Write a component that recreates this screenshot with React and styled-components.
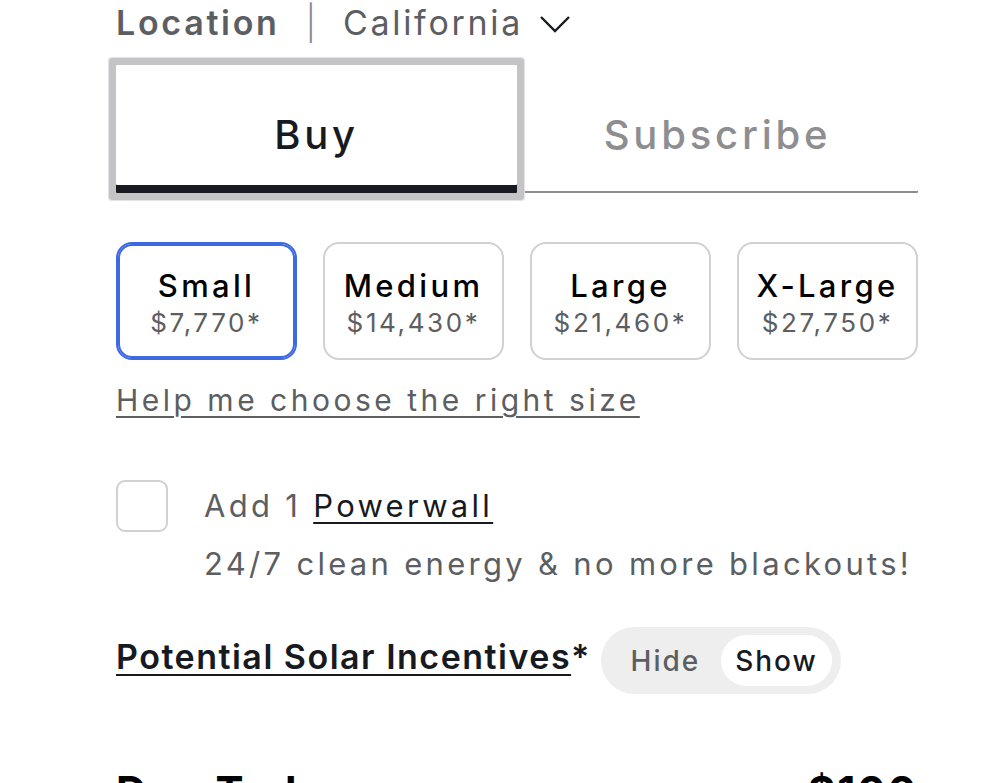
import React, { useState } from 'react';
import styled, { createGlobalStyle } from 'styled-components';

const COLORS = {
  dark: '#171a20',
  grey: '#5c5e62',
  muted: '#8e8e90',
  line: '#d0d1d2',
  blue: '#3e6ae1',
  pill: '#eeeeee',
  ring: '#c4c4c6',
};

const GlobalStyle = createGlobalStyle`
  body {
    margin: 0;
    background: #fff;
    font-family: Inter, "Noto Sans", sans-serif;
    color: ${COLORS.dark};
    overflow: hidden;
  }
`;

const Page = styled.div`
  width: 802px;
  padding-left: 116px;
`;

const LocationRow = styled.div`
  display: flex;
  align-items: center;
  height: 44px;
  font-size: 34px;
  letter-spacing: 2.7px;
  color: ${COLORS.grey};

  b {
    font-weight: 600;
  }
`;

const Divider = styled.span`
  margin: 0 24px 0 26px;
  font-weight: 300;
  color: #8a8b8e;
`;

const Chevron = styled.svg`
  margin-left: 16px;
  margin-top: 4px;
`;

const TabBar = styled.div`
  margin-top: 21px;
  display: grid;
  grid-template-columns: 1fr 1fr;
`;

const Tab = styled.button`
  border: none;
  border-radius: 1px;
  background: #fff;
  font-family: inherit;
  font-size: 40px;
  font-weight: 500;
  letter-spacing: 3.8px;
  height: 128px;
  padding: 10px 0 0;
  cursor: pointer;
  color: ${({ active }) => (active ? COLORS.dark : COLORS.muted)};
  box-shadow: ${({ active }) =>
    active
      ? `inset 0 -8px 0 ${COLORS.dark}, 0 0 0 7px ${COLORS.ring}, 0 0 1px 8px #e2e2e4`
      : `inset 0 -2px 0 ${COLORS.muted}`};
  position: relative;
  z-index: ${({ active }) => (active ? 1 : 0)};
`;

const SizeGrid = styled.div`
  margin-top: 49px;
  display: grid;
  grid-template-columns: repeat(4, 1fr);
  gap: 26px;
`;

const SizeButton = styled.button`
  height: 118px;
  border-radius: 16px;
  border: 2px solid ${({ selected }) => (selected ? COLORS.blue : COLORS.line)};
  box-shadow: ${({ selected }) => (selected ? `inset 0 0 0 2px ${COLORS.blue}` : 'none')};
  background: #fff;
  display: flex;
  flex-direction: column;
  align-items: center;
  justify-content: center;
  font-family: inherit;
  padding: 6px 0 0;
  cursor: pointer;
`;

const SizeName = styled.span`
  font-size: 31px;
  font-weight: 500;
  letter-spacing: 3.3px;
  color: #000;
  line-height: 38px;
`;

const SizePrice = styled.span`
  font-size: 26px;
  letter-spacing: 2.6px;
  color: ${COLORS.grey};
  line-height: 36px;
`;

const HelpLink = styled.a`
  display: inline-block;
  margin-top: 22px;
  font-size: 30px;
  letter-spacing: 3.5px;
  line-height: 36px;
  color: ${COLORS.grey};
  text-decoration: underline;
  text-underline-offset: 5px;
  text-decoration-thickness: 2px;
`;

const AddonRow = styled.div`
  margin-top: 62px;
  display: flex;
  gap: 36px;
  align-items: flex-start;
`;

const Checkbox = styled.span`
  flex: none;
  width: 48px;
  height: 48px;
  border: 2px solid ${COLORS.line};
  border-radius: 9px;
`;

const AddonText = styled.div`
  font-size: 31px;
  letter-spacing: 3.3px;
  color: ${COLORS.grey};
  line-height: 58px;
  margin-top: -3px;

  a {
    color: ${COLORS.dark};
    text-decoration: underline;
    text-underline-offset: 5px;
    text-decoration-thickness: 2px;
  }
`;

const IncentiveRow = styled.div`
  margin-top: 34px;
  display: flex;
  align-items: center;
  gap: 10px;
`;

const IncentiveTitle = styled.span`
  font-size: 34px;
  font-weight: 600;
  letter-spacing: 1.5px;
  color: ${COLORS.dark};
  margin-top: -8px;

  u {
    text-underline-offset: 5px;
    text-decoration-thickness: 2px;
  }
`;

const Toggle = styled.div`
  display: flex;
  background: ${COLORS.pill};
  border-radius: 34px;
  padding: 8px 9px;
`;

const ToggleOption = styled.button`
  border: none;
  width: 111px;
  height: 51px;
  padding: 0;
  border-radius: 26px;
  font-family: inherit;
  font-size: 28px;
  font-weight: 500;
  letter-spacing: 2px;
  background: ${({ on }) => (on ? '#fff' : 'transparent')};
  color: ${({ on }) => (on ? COLORS.dark : COLORS.grey)};
  cursor: pointer;
`;

const TotalRow = styled.div`
  margin-top: 74px;
  display: flex;
  justify-content: space-between;
  font-size: 42px;
  font-weight: 700;
  letter-spacing: 2px;
  line-height: 48px;
  color: #000;
`;

const sizes = [
  { name: 'Small', price: '$7,770*' },
  { name: 'Medium', price: '$14,430*' },
  { name: 'Large', price: '$21,460*' },
  { name: 'X-Large', price: '$27,750*' },
];

export default function App() {
  const [tab, setTab] = useState('buy');
  const [size, setSize] = useState('Small');
  const [show, setShow] = useState(true);

  return (
    <Page>
      <GlobalStyle />
      <LocationRow>
        <b>Location</b>
        <Divider>|</Divider>
        <span>California</span>
        <Chevron width="32" height="18" viewBox="0 0 32 18" fill="none">
          <path d="M2 2l14 14L30 2" stroke={COLORS.dark} strokeWidth="2.4" />
        </Chevron>
      </LocationRow>

      <TabBar>
        <Tab active={tab === 'buy'} onClick={() => setTab('buy')}>Buy</Tab>
        <Tab active={tab === 'subscribe'} onClick={() => setTab('subscribe')}>Subscribe</Tab>
      </TabBar>

      <SizeGrid>
        {sizes.map((s) => (
          <SizeButton key={s.name} selected={size === s.name} onClick={() => setSize(s.name)}>
            <SizeName>{s.name}</SizeName>
            <SizePrice>{s.price}</SizePrice>
          </SizeButton>
        ))}
      </SizeGrid>

      <HelpLink>Help me choose the right size</HelpLink>

      <AddonRow>
        <Checkbox />
        <AddonText>
          Add 1 <a>Powerwall</a>
          <br />
          24/7 clean energy &amp; no more blackouts!
        </AddonText>
      </AddonRow>

      <IncentiveRow>
        <IncentiveTitle>
          <u>Potential Solar Incentives</u>*
        </IncentiveTitle>
        <Toggle>
          <ToggleOption on={!show} onClick={() => setShow(false)}>Hide</ToggleOption>
          <ToggleOption on={show} onClick={() => setShow(true)}>Show</ToggleOption>
        </Toggle>
      </IncentiveRow>

      <TotalRow>
        <span>Due Today</span>
        <span>$100</span>
      </TotalRow>
    </Page>
  );
}
